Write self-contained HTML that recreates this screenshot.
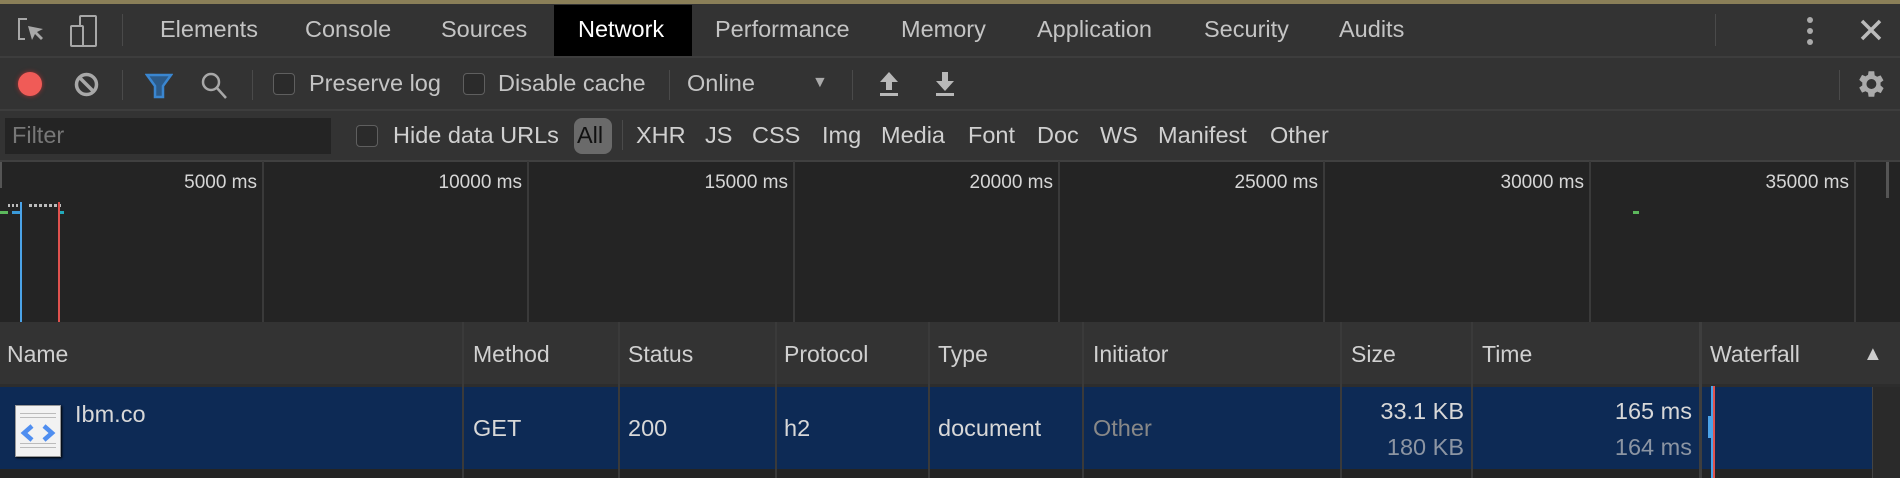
<!DOCTYPE html>
<html><head><meta charset="utf-8"><style>
*{margin:0;padding:0;box-sizing:border-box}
body{width:1900px;height:478px;background:#242424;font-family:"Liberation Sans",Arial,sans-serif;color:#c8c8c8;position:relative;overflow:hidden}
.a{position:absolute;white-space:nowrap}
.t{font-size:23.5px;top:16px;color:#c4c4c4}
.r2{top:70px;font-size:23.5px;color:#c4c4c4}
.r3{top:122px;font-size:23.5px;color:#d0d0d0}
.cb{position:absolute;width:22px;height:22px;border:1.5px solid #5f5f5f;border-radius:4px;background:#2b2b2b}
.sep{position:absolute;width:1px;background:#4a4a4a}
.gl{position:absolute;top:161px;height:161px;width:2px;background:#3a3a3a}
.lab{position:absolute;top:172px;font-size:19px;color:#d6d6d6;text-align:right;width:130px}
.h{top:341px;font-size:23px;color:#d0d0d0}
.cl{position:absolute;top:322px;height:156px;width:2px;background:#3a3a3a}
.c{font-size:23.5px;color:#d8d8d8}
</style></head><body>
<div class="a" style="left:0;top:0;width:1900px;height:4px;background:#8a7f58"></div>
<div class="a" style="left:0;top:4px;width:1900px;height:52px;background:#333"></div>
<div class="a" style="left:0;top:56px;width:1900px;height:2px;background:#3d3d3d"></div>
<div class="a" style="left:0;top:58px;width:1900px;height:52px;background:#333"></div>
<div class="a" style="left:0;top:109px;width:1900px;height:2px;background:#3d3d3d"></div>
<div class="a" style="left:0;top:111px;width:1900px;height:50px;background:#333"></div>
<div class="a" style="left:0;top:160px;width:1900px;height:2px;background:#404040"></div>
<svg class="a" style="left:15px;top:15px" width="30" height="30" viewBox="0 0 30 30" fill="none" stroke="#a8a8a8" stroke-width="2"><path d="M12 4H4v20h6"/><path d="M13 11l4 14 3-6 6 6 2-2-6-6 6-3z" fill="#a8a8a8" stroke="none"/></svg>
<svg class="a" style="left:68px;top:14px" width="32" height="34" viewBox="0 0 32 34" fill="none" stroke="#a8a8a8" stroke-width="2"><rect x="12" y="2" width="16" height="30" rx="1"/><rect x="3" y="12" width="12" height="20" rx="1" fill="#333"/></svg>
<div class="sep" style="left:122px;top:14px;height:32px"></div>
<div class="a" style="left:554px;top:5px;width:138px;height:51px;background:#000"></div>
<div class="a t" style="left:160px">Elements</div>
<div class="a t" style="left:305px">Console</div>
<div class="a t" style="left:441px">Sources</div>
<div class="a t" style="left:578px;color:#fff">Network</div>
<div class="a t" style="left:715px">Performance</div>
<div class="a t" style="left:901px">Memory</div>
<div class="a t" style="left:1037px">Application</div>
<div class="a t" style="left:1204px">Security</div>
<div class="a t" style="left:1339px">Audits</div>
<div class="sep" style="left:1715px;top:14px;height:32px"></div>
<svg class="a" style="left:1806px;top:16px" width="8" height="30"><circle cx="4" cy="4" r="3" fill="#aaa"/><circle cx="4" cy="15" r="3" fill="#aaa"/><circle cx="4" cy="26" r="3" fill="#aaa"/></svg>
<svg class="a" style="left:1860px;top:19px" width="22" height="22" stroke="#bbb" stroke-width="3.5"><path d="M2 2L20 20M20 2L2 20"/></svg>
<div class="a" style="left:18px;top:72px;width:24px;height:24px;border-radius:50%;background:#f05b57;box-shadow:0 0 5px #a33"></div>
<svg class="a" style="left:74px;top:72px" width="25" height="25" fill="none" stroke="#a8a8a8" stroke-width="3.5"><circle cx="12.5" cy="12.5" r="10"/><path d="M6 6L19 19"/></svg>
<div class="sep" style="left:122px;top:70px;height:30px"></div>
<svg class="a" style="left:145px;top:72px" width="28" height="28"><path d="M2 3h24l-8 11v11h-8V14z" fill="#2c5b8a" stroke="#3a86d0" stroke-width="2.5"/></svg>
<svg class="a" style="left:200px;top:71px" width="28" height="30" fill="none" stroke="#a8a8a8" stroke-width="2.5"><circle cx="11" cy="11" r="8"/><path d="M17 17l9 10"/></svg>
<div class="sep" style="left:252px;top:70px;height:30px"></div>
<div class="cb" style="left:273px;top:73px"></div>
<div class="a r2" style="left:309px">Preserve log</div>
<div class="cb" style="left:463px;top:73px"></div>
<div class="a r2" style="left:498px">Disable cache</div>
<div class="sep" style="left:669px;top:70px;height:30px"></div>
<div class="a r2" style="left:687px">Online</div>
<div class="a" style="left:812px;top:74px;font-size:16px;color:#aaa">▼</div>
<div class="sep" style="left:852px;top:70px;height:30px"></div>
<svg class="a" style="left:877px;top:70px" width="24" height="28" fill="#b8b8b8"><path d="M12 2L3 12h6v8h6v-8h6z"/><rect x="3" y="23" width="18" height="3"/></svg>
<svg class="a" style="left:933px;top:70px" width="24" height="28" fill="#b8b8b8"><path d="M9 2h6v9h6l-9 10-9-10h6z"/><rect x="3" y="23" width="18" height="3"/></svg>
<div class="sep" style="left:1839px;top:70px;height:30px"></div>
<svg class="a" style="left:1853px;top:67px" width="34" height="34" viewBox="0 0 24 24"><path fill="#aaa" d="M19.4 13a7.5 7.5 0 000-2l2.1-1.6-2-3.5-2.5 1a7 7 0 00-1.7-1L15 3h-4l-.4 2.6a7 7 0 00-1.7 1l-2.5-1-2 3.5L6.6 11a7.5 7.5 0 000 2l-2.2 1.6 2 3.5 2.5-1a7 7 0 001.7 1L11 21h4l.4-2.6a7 7 0 001.7-1l2.5 1 2-3.5zM13 15.5a3.5 3.5 0 110-7 3.5 3.5 0 010 7z"/></svg>
<div class="a" style="left:5px;top:118px;width:326px;height:36px;background:#242424"></div>
<div class="a r3" style="left:12px;color:#777">Filter</div>
<div class="cb" style="left:356px;top:125px"></div>
<div class="a r3" style="left:393px">Hide data URLs</div>
<div class="a" style="left:574px;top:118px;width:38px;height:36px;border-radius:8px;background:#6a6a6a"></div>
<div class="a r3" style="left:577px;color:#111">All</div>
<div class="sep" style="left:622px;top:120px;height:30px"></div>
<div class="a r3" style="left:636px">XHR</div>
<div class="a r3" style="left:705px">JS</div>
<div class="a r3" style="left:752px">CSS</div>
<div class="a r3" style="left:822px">Img</div>
<div class="a r3" style="left:881px">Media</div>
<div class="a r3" style="left:968px">Font</div>
<div class="a r3" style="left:1037px">Doc</div>
<div class="a r3" style="left:1100px">WS</div>
<div class="a r3" style="left:1158px">Manifest</div>
<div class="a r3" style="left:1270px">Other</div>
<div class="a" style="left:0;top:162px;width:2px;height:26px;background:#555"></div>
<div class="gl" style="left:262px"></div><div class="gl" style="left:527px"></div><div class="gl" style="left:793px"></div><div class="gl" style="left:1058px"></div><div class="gl" style="left:1323px"></div><div class="gl" style="left:1589px"></div><div class="gl" style="left:1854px"></div>
<div class="a" style="left:1886px;top:162px;width:3px;height:36px;background:#555"></div>
<div class="lab" style="left:127px">5000 ms</div>
<div class="lab" style="left:392px">10000 ms</div>
<div class="lab" style="left:658px">15000 ms</div>
<div class="lab" style="left:923px">20000 ms</div>
<div class="lab" style="left:1188px">25000 ms</div>
<div class="lab" style="left:1454px">30000 ms</div>
<div class="lab" style="left:1719px">35000 ms</div>
<div class="a" style="left:8px;top:204px;width:12px;height:3px;background:repeating-linear-gradient(90deg,#bbb 0 2px,transparent 2px 4px)"></div>
<div class="a" style="left:29px;top:204px;width:32px;height:3px;background:repeating-linear-gradient(90deg,#bbb 0 3px,transparent 3px 5px)"></div>
<div class="a" style="left:0;top:211px;width:8px;height:3px;background:#5cb85c"></div>
<div class="a" style="left:12px;top:211px;width:8px;height:3px;background:#3a9ad9"></div>
<div class="a" style="left:60px;top:211px;width:4px;height:3px;background:#2ab"></div>
<div class="a" style="left:20px;top:202px;width:2px;height:120px;background:#4ba3e8"></div>
<div class="a" style="left:58px;top:202px;width:2px;height:120px;background:#e0524e"></div>
<div class="a" style="left:1633px;top:211px;width:6px;height:3px;background:#5cb85c"></div>
<div class="a" style="left:0;top:322px;width:1900px;height:64px;background:#333"></div>
<div class="a" style="left:0;top:384px;width:1900px;height:3px;background:#2d2d2d"></div>
<div class="a" style="left:0;top:387px;width:1872px;height:82px;background:#0d2a55"></div>
<div class="a" style="left:1872px;top:387px;width:28px;height:91px;background:#2a2a2a;border-left:1px solid #444"></div>
<div class="cl" style="left:462px"></div><div class="cl" style="left:618px"></div><div class="cl" style="left:775px"></div><div class="cl" style="left:928px"></div><div class="cl" style="left:1082px"></div><div class="cl" style="left:1340px"></div><div class="cl" style="left:1471px"></div>
<div class="a" style="left:1699px;top:322px;width:3px;height:156px;background:#3e3e3e"></div>
<div class="a h" style="left:7px">Name</div>
<div class="a h" style="left:473px">Method</div>
<div class="a h" style="left:628px">Status</div>
<div class="a h" style="left:784px">Protocol</div>
<div class="a h" style="left:938px">Type</div>
<div class="a h" style="left:1093px">Initiator</div>
<div class="a h" style="left:1351px">Size</div>
<div class="a h" style="left:1482px">Time</div>
<div class="a h" style="left:1710px">Waterfall</div>
<div class="a" style="left:1863px;top:343px;font-size:20px;color:#ccc">▲</div>
<div class="a" style="left:15px;top:405px;width:46px;height:52px;background:#f2f2f2;border:1px solid #999;box-shadow:1px 1px 2px #000"></div>
<div class="a" style="left:20px;top:413px;width:36px;height:8px;background:repeating-linear-gradient(180deg,#bbb 0 1px,transparent 1px 4px)"></div>
<div class="a" style="left:20px;top:443px;width:36px;height:8px;background:repeating-linear-gradient(180deg,#bbb 0 1px,transparent 1px 4px)"></div>
<svg class="a" style="left:20px;top:424px" width="36" height="18" fill="none" stroke="#4f8ef0" stroke-width="4.5"><path d="M12 2L4 9l8 7M24 2l8 7-8 7"/></svg>
<div class="a c" style="left:75px;top:401px">Ibm.co</div>
<div class="a c" style="left:473px;top:415px">GET</div>
<div class="a c" style="left:628px;top:415px">200</div>
<div class="a c" style="left:784px;top:415px">h2</div>
<div class="a c" style="left:938px;top:415px">document</div>
<div class="a c" style="left:1093px;top:415px;color:#888">Other</div>
<div class="a c" style="left:1334px;width:130px;text-align:right;top:398px">33.1 KB</div>
<div class="a c" style="left:1334px;width:130px;text-align:right;top:434px;color:#8c95a3">180 KB</div>
<div class="a c" style="left:1562px;width:130px;text-align:right;top:398px">165 ms</div>
<div class="a c" style="left:1562px;width:130px;text-align:right;top:434px;color:#8c95a3">164 ms</div>
<div class="a" style="left:1711px;top:386px;width:2px;height:92px;background:#4ba3e8"></div>
<div class="a" style="left:1713px;top:386px;width:2px;height:92px;background:#e0524e"></div>
<div class="a" style="left:1708px;top:416px;width:3px;height:22px;background:#4ba3e8"></div>
</body></html>
